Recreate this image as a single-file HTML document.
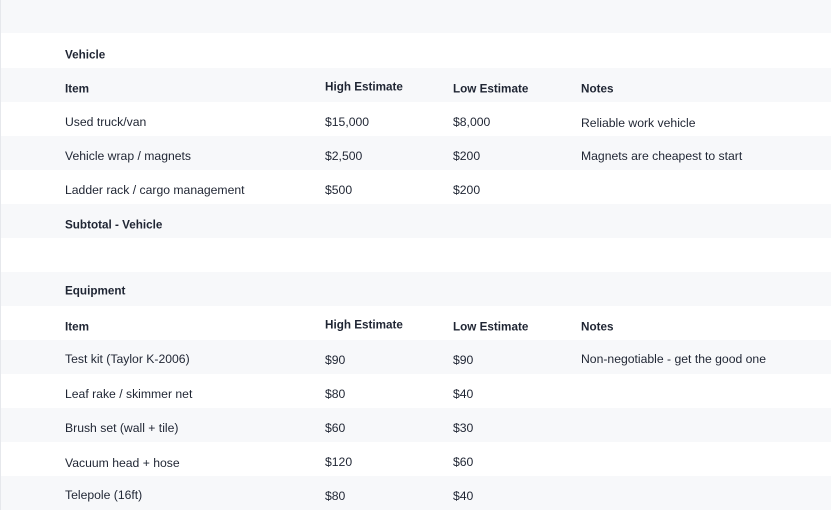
<!DOCTYPE html><html><head><style>
body{margin:0;width:831px;height:510px;overflow:hidden;background:#fff;font-family:"Liberation Sans",sans-serif;font-size:12.2px;color:#1f2533;position:relative}
.r{position:absolute;left:0;width:831px;border-left:1px solid #e6e8ec;box-sizing:border-box}
.g{background:#f7f8fa}
.t{position:absolute;white-space:nowrap;transform:translateY(-50%)}
.b{font-weight:bold;font-size:11.7px}
</style></head><body>
<div class="r g" style="top:0;height:33px"></div>
<div class="r" style="top:33px;height:35px"></div>
<div class="r g" style="top:68px;height:34px"></div>
<div class="r" style="top:102px;height:34px"></div>
<div class="r g" style="top:136px;height:34px"></div>
<div class="r" style="top:170px;height:34px"></div>
<div class="r g" style="top:204px;height:34px"></div>
<div class="r" style="top:238px;height:34px"></div>
<div class="r g" style="top:272px;height:34px"></div>
<div class="r" style="top:306px;height:34px"></div>
<div class="r g" style="top:340px;height:34px"></div>
<div class="r" style="top:374px;height:34px"></div>
<div class="r g" style="top:408px;height:34px"></div>
<div class="r" style="top:442px;height:34px"></div>
<div class="r g" style="top:476px;height:34px"></div>

<div class="t b" style="left:65px;top:55px">Vehicle</div>
<div class="t b" style="left:65px;top:89px">Item</div>
<div class="t b" style="left:325px;top:87px">High Estimate</div>
<div class="t b" style="left:453px;top:89px">Low Estimate</div>
<div class="t b" style="left:581px;top:89px">Notes</div>

<div class="t" style="left:65px;top:122px">Used truck/van</div>
<div class="t" style="left:325px;top:122px">$15,000</div>
<div class="t" style="left:453px;top:122px">$8,000</div>
<div class="t" style="left:581px;top:123px">Reliable work vehicle</div>

<div class="t" style="left:65px;top:156px">Vehicle wrap / magnets</div>
<div class="t" style="left:325px;top:156px">$2,500</div>
<div class="t" style="left:453px;top:156px">$200</div>
<div class="t" style="left:581px;top:156px">Magnets are cheapest to start</div>

<div class="t" style="left:65px;top:190px">Ladder rack / cargo management</div>
<div class="t" style="left:325px;top:190px">$500</div>
<div class="t" style="left:453px;top:190px">$200</div>

<div class="t b" style="left:65px;top:225px">Subtotal - Vehicle</div>

<div class="t b" style="left:65px;top:291px">Equipment</div>
<div class="t b" style="left:65px;top:327px">Item</div>
<div class="t b" style="left:325px;top:325px">High Estimate</div>
<div class="t b" style="left:453px;top:327px">Low Estimate</div>
<div class="t b" style="left:581px;top:327px">Notes</div>

<div class="t" style="left:65px;top:359px">Test kit (Taylor K-2006)</div>
<div class="t" style="left:325px;top:360px">$90</div>
<div class="t" style="left:453px;top:360px">$90</div>
<div class="t" style="left:581px;top:359px">Non-negotiable - get the good one</div>

<div class="t" style="left:65px;top:394px">Leaf rake / skimmer net</div>
<div class="t" style="left:325px;top:394px">$80</div>
<div class="t" style="left:453px;top:394px">$40</div>

<div class="t" style="left:65px;top:428px">Brush set (wall + tile)</div>
<div class="t" style="left:325px;top:428px">$60</div>
<div class="t" style="left:453px;top:428px">$30</div>

<div class="t" style="left:65px;top:463px">Vacuum head + hose</div>
<div class="t" style="left:325px;top:462px">$120</div>
<div class="t" style="left:453px;top:462px">$60</div>

<div class="t" style="left:65px;top:495px">Telepole (16ft)</div>
<div class="t" style="left:325px;top:496px">$80</div>
<div class="t" style="left:453px;top:496px">$40</div>
</body></html>
